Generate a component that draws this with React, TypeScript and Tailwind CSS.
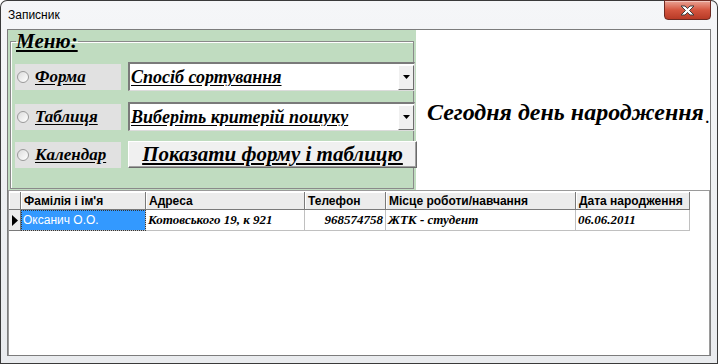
const serif = "font-['Liberation_Serif',serif]"
const sans = "font-['Liberation_Sans',sans-serif]"

function Radio() {
    return (
        <span className="w-[12px] h-[12px] rounded-full border border-[#9a9a9a] bg-gradient-to-br from-[#dcdcdc] to-white shrink-0" />
    )
}

function OptionLabel({ text }: { text: string }) {
    return (
        <div className="ml-[4px] w-[106px] h-[26px] bg-[#e1e1e1] flex items-center pl-[2px] shrink-0">
            <Radio />
            <span className={`${serif} ml-[6px] text-[17px] font-bold italic underline underline-offset-2 text-black leading-none`}>{text}</span>
        </div>
    )
}

function Combo({ text, size }: { text: string; size: string }) {
    return (
        <div className="ml-[7px] w-[287px] h-[29px] shrink-0 bg-white border-t-2 border-l-2 border-b border-r border-t-[#7a7a7a] border-l-[#7a7a7a] border-b-[#dcdcdc] border-r-[#dcdcdc] flex items-center">
            <span className={`${serif} ${size} flex-1 pl-[1px] font-bold italic underline underline-offset-2 text-black whitespace-nowrap overflow-hidden leading-none`}>{text}</span>
            <div className="w-[16px] h-[25px] bg-[#f0f0f0] border border-t-white border-l-white border-b-[#6d6d6d] border-r-[#6d6d6d] flex items-center justify-center">
                <svg width="7" height="4" viewBox="0 0 7 4"><path d="M0 0h7L3.5 4z" fill="#000" /></svg>
            </div>
        </div>
    )
}

const cols = [
    { title: "Фамілія і ім'я", w: 'w-[125px]' },
    { title: 'Адреса', w: 'w-[159px]' },
    { title: 'Телефон', w: 'w-[81px]' },
    { title: 'Місце роботи/навчання', w: 'w-[190px]' },
    { title: 'Дата народження', w: 'w-[114px]' },
]

export default function App() {
    return (
        <div className={`w-[718px] h-[364px] bg-[#3a3a3a] rounded-t-[7px] p-px ${sans}`}>
            <div className="w-full h-full rounded-t-[6px] bg-gradient-to-b from-[#f5f6f8] via-[#eef0f2] to-[#e9ebee] flex flex-col">
                {/* Title bar */}
                <div className="h-[28px] flex items-start justify-between shrink-0">
                    <span className="ml-[7px] mt-[5px] text-[12px] text-black">Записник</span>
                    <div className="-mt-px mr-[6px] w-[47px] h-[20px] rounded-b-[4px] border border-[#6e2a22] bg-gradient-to-b from-[#e9a294] via-[#d4553f] to-[#b83a26] flex items-center justify-center shadow-[inset_0_1px_0_rgba(255,255,255,0.4)]">
                        <svg width="15" height="11" viewBox="0 0 15 11">
                            <path d="M1 1h4l2.5 2.6L10 1h4l-4.5 4.5L14 10h-4L7.5 7.4 5 10H1l4.5-4.5z" fill="#fff" stroke="#3d3d3d" strokeWidth="1" strokeLinejoin="round" />
                        </svg>
                    </div>
                </div>

                {/* Client */}
                <div className="ml-[6px] w-[704px] h-[327px] border border-[#7c7c7c] bg-white flex flex-col shrink-0 overflow-hidden">
                    <div className="h-[160px] flex shrink-0">
                        {/* Green menu panel */}
                        <div className="w-[408px] h-full bg-[#c0dcc0] flex flex-col px-[2px] pb-[1px] shrink-0">
                            <fieldset className="flex-1 min-w-0 border border-[#8a8a8a] shadow-[inset_1px_1px_0_#fff] p-0 m-0">
                                <legend className={`${serif} ml-[5px] p-0 text-[21px] leading-[22px] font-bold italic underline underline-offset-2 text-black`}>Меню:</legend>
                                <div className="mt-[10px] flex items-center">
                                    <OptionLabel text="Форма" />
                                    <Combo text="Спосіб сортування" size="text-[18px]" />
                                </div>
                                <div className="mt-[11px] flex items-center">
                                    <OptionLabel text="Таблиця" />
                                    <Combo text="Виберіть критерій пошуку" size="text-[18px]" />
                                </div>
                                <div className="mt-[10px] flex items-center">
                                    <OptionLabel text="Календар" />
                                    <div className="ml-[7px] w-[289px] h-[27px] shrink-0 bg-[#f0f0f0] border border-t-white border-l-white border-b-[#6a6a6a] border-r-[#6a6a6a] shadow-[inset_-1px_-1px_0_#a0a0a0] flex items-center justify-center">
                                        <span className={`${serif} text-[21px] font-bold italic underline underline-offset-2 text-black leading-none`}>Показати форму і таблицю</span>
                                    </div>
                                </div>
                            </fieldset>
                        </div>
                        {/* Birthday text */}
                        <div className="flex-1 min-w-0 flex items-center pl-[11px] pt-[4px]">
                            <span className={`${serif} text-[24px] font-bold italic text-black whitespace-nowrap`}>Сегодня день народження</span>
                            <span className={`${serif} ml-auto mr-[1px] mt-[12px] text-[14px] font-bold text-black`}>.</span>
                        </div>
                    </div>

                    {/* Grid */}
                    <div className="flex-1 border-t border-l border-r border-[#9a9a9a] pt-[1px] bg-white">
                        <div className="flex h-[18px]">
                            <div className="w-[12px] bg-[#ececec] border-r border-b border-[#7a7a7a] shadow-[inset_1px_1px_0_#fff]" />
                            {cols.map((c) => (
                                <div key={c.title} className={`${c.w} bg-[#ececec] border-r border-b border-[#7a7a7a] shadow-[inset_1px_1px_0_#fff] pl-[3px] flex items-center text-[12px] font-bold text-black whitespace-nowrap overflow-hidden`}>
                                    {c.title}
                                </div>
                            ))}
                        </div>
                        <div className="flex h-[21px]">
                            <div className="w-[12px] bg-[#ececec] border-r border-b border-[#7a7a7a] flex items-center justify-center">
                                <svg width="6" height="11" viewBox="0 0 6 11"><path d="M0 0l6 5.5L0 11z" fill="#000" /></svg>
                            </div>
                            <div className="w-[125px] bg-[#3399ff] border-r border-b border-[#c0c0c0] outline outline-1 outline-dotted outline-[#333] -outline-offset-1 pl-[2px] flex items-center text-[12px] text-white">
                                Оксанич О.О.
                            </div>
                            <div className={`${serif} w-[159px] border-r border-b border-[#c0c0c0] pl-[2px] flex items-center text-[13px] font-bold italic text-black whitespace-nowrap`}>
                                Котовського 19, к 921
                            </div>
                            <div className={`${serif} w-[81px] border-r border-b border-[#c0c0c0] pr-[2px] flex items-center justify-end text-[13px] font-bold italic text-black`}>
                                968574758
                            </div>
                            <div className={`${serif} w-[190px] border-r border-b border-[#c0c0c0] pl-[2px] flex items-center text-[13px] font-bold italic text-black`}>
                                ЖТК - студент
                            </div>
                            <div className={`${serif} w-[114px] border-r border-b border-[#c0c0c0] pl-[2px] flex items-center text-[13px] font-bold italic text-black`}>
                                06.06.2011
                            </div>
                        </div>
                    </div>
                </div>
            </div>
        </div>
    )
}
